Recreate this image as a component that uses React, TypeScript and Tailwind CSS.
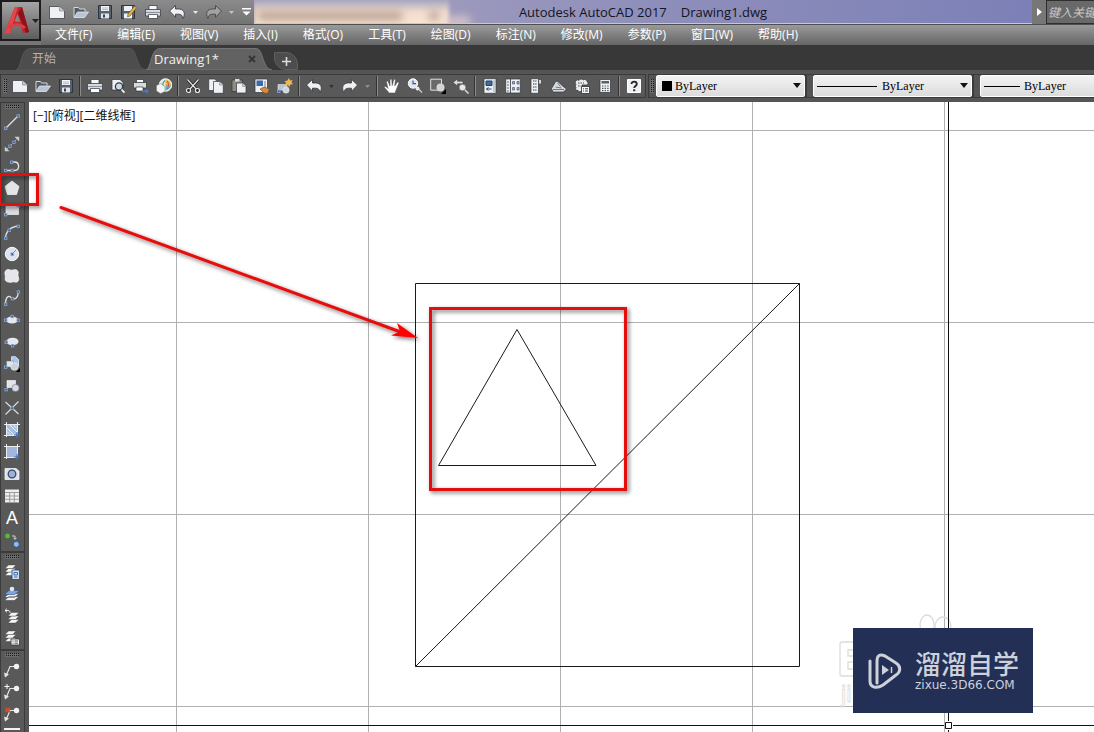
import type { ReactNode } from "react";
import clsx from "clsx";

type Tool = {
  label: string;
  icon: ReactNode;
};

const LIGHT = "#eef0f3";
const DARK = "#2f3338";
const BLUE = "#7fa6dc";

const MENUS = [
  "文件(F)",
  "编辑(E)",
  "视图(V)",
  "插入(I)",
  "格式(O)",
  "工具(T)",
  "绘图(D)",
  "标注(N)",
  "修改(M)",
  "参数(P)",
  "窗口(W)",
  "帮助(H)",
];

function Icon({ children, size = 16 }: { children: ReactNode; size?: number }) {
  return (
    <svg width={size} height={size} viewBox="0 0 16 16" fill="none" aria-hidden="true">
      {children}
    </svg>
  );
}

// small blue grip point used by the draw tools
function Node({ x, y }: { x: number; y: number }) {
  return <rect x={x - 1} y={y - 1} width="2.4" height="2.4" fill="#44597c" stroke={BLUE} strokeWidth="0.9" />;
}

const newIcon = (
  <Icon>
    <path d="M.5 2.500h10l5 4.500v7.500h-15z" fill={LIGHT} stroke={DARK} strokeWidth=".7" />
    <path d="M10.500 2.500v4.500h5" fill="#c3c8cf" stroke="#85898f" strokeWidth=".7" />
  </Icon>
);

const openIcon = (
  <Icon>
    <path d="M1 13V3.500h4.500l1 1.500H12v2.500" fill="#555b63" stroke="#d5dae0" />
    <path d="M1 13.500 4.500 8H15.500L11.500 13.500z" fill="#b7c5d6" stroke="#e4e9ef" strokeWidth=".8" />
  </Icon>
);

const saveIcon = (
  <Icon>
    <path d="M1.500 1.500h13v13h-13z" fill="#58626f" stroke="#2d343d" />
    <path d="M4 2h8v5H4z" fill="#f4f6f8" />
    <path d="M5 4h6M5 5.700h6" stroke="#8da2bd" strokeWidth=".7" />
    <path d="M4 9.500h8v5H4z" fill="#dfe4ea" />
    <path d="M6 10.500h2v3H6z" fill="#38404b" />
  </Icon>
);

const saveAsIcon = (
  <Icon>
    <path d="M.5 1.500h13v13H.5z" fill="#58626f" stroke="#2d343d" />
    <path d="M3 2h8v5H3zM3 9.500h8v5H3z" fill="#eef1f4" />
    <path d="m7 10 6.500-8 2 1.700L9 12l-2.500.8z" fill="#e5b447" stroke="#5e4b25" strokeWidth=".6" />
  </Icon>
);

const printIcon = (
  <Icon>
    <path d="M4 1.500h8V6H4z" fill="#f6f7f9" stroke={DARK} strokeWidth=".7" />
    <path d="M.5 5.500h15V12H.5z" fill="#d6dbe1" stroke={DARK} strokeWidth=".7" />
    <path d="M1 8.500h14" stroke="#87909b" />
    <path d="M3.500 10.500h9v4h-9z" fill="#fff" stroke={DARK} strokeWidth=".7" />
  </Icon>
);

const undoIcon = (
  <Icon>
    <path
      d="M.5 7 6.500 1.500V5h3c4.200 0 5.800 2.500 5.800 5.200 0 1.600-.5 3-1.300 4.300-.3-2.800-1.700-4.300-4.500-4.300h-3v3z"
      fill={LIGHT}
      stroke={DARK}
      strokeWidth=".8"
    />
  </Icon>
);

function RedoIcon({ fill = LIGHT }: { fill?: string }) {
  return (
    <Icon>
      <path
        d="M15.500 7 9.500 1.500V5h-3C2.300 5 .7 7.500.7 10.200c0 1.600.5 3 1.300 4.300.3-2.800 1.700-4.300 4.500-4.300h3v3z"
        fill={fill}
        stroke={DARK}
        strokeWidth=".7"
      />
    </Icon>
  );
}

const STANDARD_GROUPS: Tool[][] = [
  [
    { label: "新建", icon: newIcon },
    { label: "打开", icon: openIcon },
    { label: "保存", icon: saveIcon },
  ],
  [
    { label: "打印", icon: printIcon },
    {
      label: "打印预览",
      icon: (
        <Icon>
          <path d="M2 1.500h8l3 3V12H2z" fill={LIGHT} stroke={DARK} strokeWidth=".7" />
          <circle cx="9" cy="8.500" r="3.600" fill="#cfd9e5" stroke="#333941" strokeWidth="1.300" />
          <path d="m11.500 11.500 3 3.200" stroke="#f2f2f2" strokeWidth="1.800" />
        </Icon>
      ),
    },
    {
      label: "发布",
      icon: (
        <Icon>
          <path d="M3.500 1.500h7V5h-7z" fill="#f6f7f9" stroke={DARK} strokeWidth=".7" />
          <path d="M.5 4.500h13v5.500H.5z" fill="#d6dbe1" stroke={DARK} strokeWidth=".7" />
          <path d="M3 9h7v4H3z" fill="#fff" stroke={DARK} strokeWidth=".7" />
          <path d="M9 12.500h4v-2l3 3-3 2.500v-2H9z" fill="#4a78c8" />
        </Icon>
      ),
    },
    {
      label: "三维打印",
      icon: (
        <Icon>
          <circle cx="9.500" cy="7" r="6.300" fill="#e6edf2" stroke="#f1f1f1" />
          <path d="M9.500 1.500A5.700 5.700 0 0 1 15 7H9.500z" fill="#e6b23e" />
          <path d="M15 7a5.700 5.700 0 0 1-5.500 5.500V7z" fill="#6bb7c5" />
          <path d="M9 2.500c-3 2-3 7 0 9" stroke="#4ba36b" strokeWidth="1.400" />
          <path d="M11 3c2 2 2 6 0 8" stroke="#c9504a" />
          <path d="M.5 7.500 4.500 5.500 9 8.500v5L4.500 15.500.5 13z" fill="#f1f3f5" stroke="#777" strokeWidth=".5" />
        </Icon>
      ),
    },
  ],
  [
    {
      label: "剪切",
      icon: (
        <Icon>
          <path d="M2.500 1.500 11 11M13.500 1.500 5 11" stroke="#1e1e1e" strokeWidth="2.800" />
          <path d="M2.500 1.500 11 11M13.500 1.500 5 11" stroke="#e9e9e9" strokeWidth="1.200" />
          <circle cx="3.500" cy="12.500" r="2" stroke="#e9e9e9" strokeWidth="1.200" fill="#222" />
          <circle cx="12.500" cy="12.500" r="2" stroke="#e9e9e9" strokeWidth="1.200" fill="#222" />
        </Icon>
      ),
    },
    {
      label: "复制",
      icon: (
        <Icon>
          <path d="M.7 1h6l2.500 2.500v9H.7z" fill={LIGHT} stroke={DARK} strokeWidth=".7" />
          <path d="M5.500 3.500h6L15.300 7v8.300H5.500z" fill={LIGHT} stroke={DARK} strokeWidth=".7" />
          <path d="M11.500 3.500V7h3.800" fill="#c6cbd2" stroke="#85898f" strokeWidth=".6" />
        </Icon>
      ),
    },
    {
      label: "粘贴",
      icon: (
        <Icon>
          <path d="M1 2h10.500v11.500H1z" fill="#938a80" stroke={DARK} strokeWidth=".7" />
          <path d="M4 1h4.500v2.500H4z" fill="#ddd" />
          <path d="M5.500 5h6L15 8.500V15H5.500z" fill={LIGHT} stroke={DARK} strokeWidth=".7" />
          <path d="M11.500 5v3.500H15" fill="#c6cbd2" stroke="#85898f" strokeWidth=".6" />
        </Icon>
      ),
    },
    {
      label: "特性匹配",
      icon: (
        <Icon>
          <path d="M1 1h12.500v13.500H1z" fill={LIGHT} stroke={DARK} strokeWidth=".7" />
          <path d="M2.500 2.500H9V8H2.500z" fill="#3d6ba8" />
          <path d="M11 3v7" stroke="#6f7c8c" />
          <path d="m6 11 4-2 5.500 2-2 4.500-3.500-.5z" fill="#d58a3c" stroke="#6b4a22" strokeWidth=".6" />
        </Icon>
      ),
    },
    {
      label: "块编辑器",
      icon: (
        <Icon>
          <path d="M1 6.500h9v5.500H1z" fill="#b8c3d2" stroke="#e5e9ee" strokeWidth=".6" />
          <circle cx="9" cy="12" r="3.200" fill="#cfd6df" stroke="#eee" strokeWidth=".5" />
          <Node x={1.500} y={13} />
          <path d="m12 0 1 2.500 2.500-.5-1 2.300 1.500 2-2.700.2L12.500 9l-1.800-2.200L8 7.500 9 5 7.500 3l2.700-.3z" fill="#f0b84a" />
        </Icon>
      ),
    },
  ],
];

const ZOOM_TOOLS: Tool[] = [
  {
    label: "平移",
    icon: (
      <Icon>
        <path
          d="M5 15c-1-2-3-3.500-4.500-5.500C0 8.500 1.500 8 2.500 9L4 10.500 2.500 4c-.2-1.200 1.300-1.500 1.700-.3L6 8 6 2c0-1.300 1.700-1.300 1.800 0L8.200 7.500 9.700 2c.3-1.200 1.900-.8 1.700.4L10.700 8l2.500-3.500c.7-1 2-.2 1.500.9L12.500 11 11 15z"
          fill="#fff"
          stroke="#4b4b4b"
          strokeWidth=".5"
        />
      </Icon>
    ),
  },
  {
    label: "实时缩放",
    icon: (
      <Icon>
        <circle cx="6" cy="5.500" r="4.700" fill="#dfe7f0" stroke="#fff" />
        <path d="M6 2.500v3.200h3" stroke="#365a8a" strokeWidth="1.200" />
        <path d="m10 9.500 5 5" stroke="#cfcfcf" strokeWidth="1.200" />
        <circle cx="10.500" cy="10.500" r="2" fill="#e8e8e8" />
      </Icon>
    ),
  },
  {
    label: "窗口缩放",
    icon: (
      <Icon>
        <path d="M.7 1.200h10.800v11H.7z" fill="#6a6a6a" stroke="#e0e0e0" />
        <circle cx="10.500" cy="9.500" r="4" fill="#d5d5d5" />
        <path d="M16 11v5h-5z" fill="#000" />
      </Icon>
    ),
  },
  {
    label: "缩放上一个",
    icon: (
      <Icon>
        <path d="M0 4.500 4.500 1v2.300H10v2.500H4.500V8z" fill="#dedede" stroke="#333" strokeWidth=".5" />
        <circle cx="9.500" cy="9.500" r="3.300" fill="#e8e8e8" stroke="#555" strokeWidth=".5" />
        <path d="m12 12 3.500 3.500" stroke="#dedede" strokeWidth="1.500" />
      </Icon>
    ),
  },
];

const PALETTE_TOOLS: Tool[] = [
  {
    label: "特性",
    icon: (
      <Icon>
        <path d="M2 .7h12v14.600H2z" fill={LIGHT} stroke={DARK} strokeWidth=".7" />
        <path d="M4 3h6v4.500H4z" fill="#3d6ba8" stroke="#223f66" />
        <path d="M12 2v12" stroke="#9aa2ab" />
        <path d="M4.500 11h5M4.500 11l2-1.500M4.500 11l2 1.500" stroke="#29456d" />
      </Icon>
    ),
  },
  {
    label: "设计中心",
    icon: (
      <Icon>
        <path d="M.7 1h14.600v14H.7z" fill={LIGHT} stroke={DARK} strokeWidth=".7" />
        <path d="M5.500 1v14" stroke={DARK} strokeWidth=".8" />
        <path d="M2 4h2M2 7h2M2 10h2M2 13h2" stroke="#4f627d" strokeWidth=".9" />
        <path d="M7.500 3.500h2v2.500h-2zM12 3.500h2v2.500h-2zM7.500 9.500h2v2.500h-2zM12 9.500h2v2.500h-2z" fill="#9fb2cc" stroke="#33445e" strokeWidth=".6" />
      </Icon>
    ),
  },
  {
    label: "工具选项板",
    icon: (
      <Icon>
        <path d="M3 .7h7.500v14.600H3z" fill={LIGHT} stroke={DARK} strokeWidth=".7" />
        <path d="M10.500 1.500h3V6h-3z" fill="#cfd3d8" stroke={DARK} strokeWidth=".6" />
        <path d="M5 3h3.500M5 6h3.500M5 9h3.500M5 12h3.500" stroke="#6d7681" strokeWidth="1.300" strokeDasharray="1.500 .7" />
      </Icon>
    ),
  },
  {
    label: "图纸集管理器",
    icon: (
      <Icon>
        <path d="M.5 10.500 5 3l2.500 1L11 7.500l4.500 3.500-3 3H2z" fill="#d8dce1" stroke={DARK} strokeWidth=".7" />
        <path d="M2 11.500h11M4.500 9l6 1M6.500 5l3 3.500" stroke="#565d66" strokeWidth=".8" />
      </Icon>
    ),
  },
  {
    label: "标记集管理器",
    icon: (
      <Icon>
        <path
          d="M1.500 3.500c1-2 3-2 3.500-1C6 .5 8.500.7 9 2c1.500-1 4-.5 4 1.500 1.500.5 1.500 3 0 3.500H8v5.500c-2 2-3.500 1-4 0-2 .5-3-1.500-2-3-1-1-1-2 0-3-1-1-1-2-.5-3z"
          fill="#e9ebee"
          stroke={DARK}
          strokeWidth=".8"
        />
        <path d="M4 5h6M4 8h3" stroke="#444" strokeDasharray="1.500 1" />
        <path d="M7.500 8.500h8v7h-8z" fill="#f5f6f7" stroke={DARK} strokeWidth=".8" />
        <path d="M9 10.800h1M11 10.800h3M9 13h1M11 13h3" stroke="#3f4854" />
      </Icon>
    ),
  },
  {
    label: "快速计算器",
    icon: (
      <Icon>
        <path d="M3 1.500h10.500v13H3z" fill={LIGHT} stroke={DARK} strokeWidth=".7" />
        <path d="M4.500 3h7.500v2.500H4.500z" fill="#59616b" />
        <path d="M5 8h7M5 10.300h7M5 12.600h7" stroke="#4d545c" strokeWidth="1.200" strokeDasharray="1.400 1.200" />
      </Icon>
    ),
  },
];

const HELP: Tool = {
  label: "帮助",
  icon: (
    <Icon>
      <path d="M1.500 1.500h13v13h-13z" fill={LIGHT} stroke="#fff" />
      <path d="M5.500 6c0-3.300 5.300-3 5.300 0C10.800 8 8.200 8 8.200 10" stroke="#262626" strokeWidth="1.800" />
      <path d="M7.200 11.300h2v1.900h-2z" fill="#262626" />
    </Icon>
  ),
};

const DRAW_TOOLS: Tool[] = [
  {
    label: "直线",
    icon: (
      <Icon>
        <path d="M1.500 14.500 14 2" stroke="#e4e4e4" strokeWidth="1.300" />
        <Node x={1.500} y={14} />
        <Node x={14} y={1.800} />
      </Icon>
    ),
  },
  {
    label: "构造线",
    icon: (
      <Icon>
        <path d="M2.500 13.500 13 3" stroke="#9bb8e0" strokeDasharray="2 1" />
        <path d="M.8 15.200v-4.700l4.700 4.700zM15.200.8v4.700L10.500.8z" fill="#cfcfcf" />
        <Node x={5.800} y={10} />
        <Node x={9.800} y={6} />
      </Icon>
    ),
  },
  {
    label: "多段线",
    icon: (
      <Icon>
        <path d="M1.500 12.500h9c5.500 0 5.500-8.500 0-8.500H8" stroke="#e4e4e4" strokeWidth="1.300" />
        <Node x={1.500} y={12.300} />
        <Node x={8} y={12.300} />
        <Node x={7.500} y={4} />
      </Icon>
    ),
  },
  {
    label: "多边形",
    icon: (
      <Icon>
        <path d="M8 1 15 6.500 12.500 14.500h-9L1 6.500z" fill="#e3e4e6" stroke="#f8f8f8" strokeWidth=".7" />
      </Icon>
    ),
  },
  {
    label: "矩形",
    icon: (
      <Icon>
        <path d="M2 3.500h12.500v9H2z" fill="#d9dce2" stroke="#f4f4f4" strokeWidth=".7" />
        <Node x={1.500} y={12.500} />
        <Node x={14} y={3.500} />
      </Icon>
    ),
  },
  {
    label: "圆弧",
    icon: (
      <Icon>
        <path d="M1.500 14C2 7 7 2.500 14.500 2.200" stroke="#e4e4e4" strokeWidth="1.300" />
        <Node x={1.500} y={14} />
        <Node x={5} y={6} />
        <Node x={14} y={2.200} />
      </Icon>
    ),
  },
  {
    label: "圆",
    icon: (
      <Icon>
        <circle cx="8" cy="8" r="6.700" fill="#dde4ef" stroke="#fff" strokeWidth=".9" />
        <path d="m8 8 4-4" stroke="#7797c6" />
        <Node x={8} y={8} />
      </Icon>
    ),
  },
  {
    label: "修订云线",
    icon: (
      <Icon>
        <path
          d="M1.500 3c1-1.500 3-1.800 4.500-1 2 .8 4-.8 6-.2 2.300.7 2.500 3 2 4.700-.3 1.500.9 3 .7 5-.3 2.300-2 3-3.700 2.500-2-.7-3.500.7-5.500.3-1.500-.5-3-.3-4-1.800-.8-1.500 0-3-.2-4.500C1 6.300.5 4.500 1.500 3z"
          fill="#e5e6ea"
          stroke="#fff"
          strokeWidth=".7"
        />
      </Icon>
    ),
  },
  {
    label: "样条曲线",
    icon: (
      <Icon>
        <path d="M1.500 14c0-7 3-9 5.500-6.500C9.500 10.500 14 9 14.300 2" stroke="#e4e4e4" strokeWidth="1.300" />
        <Node x={1.500} y={14} />
        <Node x={8.300} y={8.500} />
        <Node x={14.200} y={1.800} />
      </Icon>
    ),
  },
  {
    label: "椭圆",
    icon: (
      <Icon>
        <ellipse cx="8" cy="8" rx="6" ry="3.600" fill="#e5e8ee" />
        <Node x={1.500} y={8} />
        <Node x={14} y={8} />
        <Node x={8} y={4.300} />
      </Icon>
    ),
  },
  {
    label: "椭圆弧",
    icon: (
      <Icon>
        <ellipse cx="8.500" cy="7.500" rx="6" ry="3.800" fill="#e5e8ee" />
        <Node x={2} y={8} />
        <Node x={8.500} y={11.500} />
      </Icon>
    ),
  },
  {
    label: "插入块",
    icon: (
      <Icon>
        <path d="M7.500.7h4L14.500 3.500V10h-7z" fill="#a9c5ec" stroke="#e6eefa" strokeWidth=".8" />
        <path d="M2.500 5h7v6h-7z" fill="#e0e4eb" stroke="#5b6472" strokeWidth=".4" />
        <circle cx="10.500" cy="10.500" r="3.800" fill="#c9d0da" stroke="#f1f1f1" strokeWidth=".6" />
        <Node x={1.500} y={11} />
        <path d="M16 12v4h-4z" fill="#000" />
      </Icon>
    ),
  },
  {
    label: "创建块",
    icon: (
      <Icon>
        <path d="M3 2.500h8.500v7H3z" fill="#e0e4eb" stroke="#fff" strokeWidth=".6" />
        <circle cx="11.500" cy="10" r="3.600" fill="#d3dae3" stroke="#6b7482" strokeWidth=".6" />
        <Node x={2} y={11.500} />
      </Icon>
    ),
  },
  {
    label: "点",
    icon: (
      <Icon>
        <path d="M1.500 14.500 14.500 1.500M1.500 2 8 8M8 8l6.500 6" stroke="#dedede" strokeWidth="1.100" />
        <Node x={8} y={8} />
      </Icon>
    ),
  },
  {
    label: "图案填充",
    icon: (
      <Icon>
        <path d="M3 3h10v10H3z" fill="#a8bede" />
        <path d="m3 6 7 7M3 9.500 6.500 13M6 3l7 7M9.500 3 13 6.500" stroke="#eef3fb" />
        <path d="M2.500 0v15M13.500 0v12M0 2.500h16M0 13.500h12" stroke="#ececec" />
        <path d="M13 10v6M10 13h6" stroke="#4779cc" strokeWidth="1.200" />
      </Icon>
    ),
  },
  {
    label: "渐变色",
    icon: (
      <Icon>
        <path d="M3 3h10v10H3z" fill="#a3b7dc" />
        <path d="M2.500 0v15M13.500 0v12M0 2.500h16M0 13.500h12" stroke="#ececec" />
        <path d="M13 10v6M10 13h6" stroke="#4779cc" strokeWidth="1.200" />
      </Icon>
    ),
  },
  {
    label: "面域",
    icon: (
      <Icon>
        <path d="M1 2.500h11l3 2.500v8.500H1z" fill="#dfe4ec" stroke="#fff" strokeWidth=".7" />
        <circle cx="8" cy="8" r="3.800" fill="#9db2d2" stroke="#33496c" strokeWidth="1.300" />
      </Icon>
    ),
  },
  {
    label: "表格",
    icon: (
      <Icon>
        <path d="M1 1.500h14v13H1z" fill="#ededed" />
        <path d="M1 4.500h14M1 8h14M1 11.300h14M5.700 4.500v10M10.300 4.500v10" stroke="#8a8a8a" strokeWidth=".8" />
      </Icon>
    ),
  },
  {
    label: "多行文字",
    icon: (
      <span aria-hidden="true" className="font-['Liberation_Sans'] text-lg leading-5 text-white">
        A
      </span>
    ),
  },
  {
    label: "添加选定对象",
    icon: (
      <Icon>
        <circle cx="3.500" cy="4" r="2.900" fill="#62b04c" stroke="#2c5a21" strokeWidth=".6" />
        <path d="M8 4h3v3M9.500 5.800 11 7.500l1.500-1.700" stroke="#d0d0d0" />
        <circle cx="12.300" cy="12.300" r="3" fill="#8dbdf0" stroke="#234a78" strokeWidth=".8" />
      </Icon>
    ),
  },
];

function Layers({ x = 0, y = 0 }: { x?: number; y?: number }) {
  return (
    <g transform={`translate(${x} ${y})`} stroke="#3a3a3a" strokeWidth=".4" fill="#f5f5f5">
      <path d="M0 11.500 3.500 8H11L7.500 11.500z" />
      <path d="M0 8 3.500 4.500H11L7.500 8z" />
      <path d="M0 4.500 3.500 1H11L7.500 4.500z" />
    </g>
  );
}

const LAYER_TOOLS: Tool[] = [
  {
    label: "图层特性管理器",
    icon: (
      <Icon>
        <Layers x={1} />
        <path d="M8 6h7.500v9.500H8z" fill="#cfe0f5" stroke="#2d4567" strokeWidth=".8" />
        <path d="M10 8.500h3.500v2.500H10zM10 13h3.500" stroke="#3d6ba8" />
      </Icon>
    ),
  },
  {
    label: "将对象的图层置为当前",
    icon: (
      <Icon>
        <path d="M.5 14.500 5 10.500H15L10.500 14.500zM.5 11.500 5 7.500H15l-4.500 4z" fill="#f1f1f1" stroke="#3a3a3a" strokeWidth=".5" />
        <path d="M.5 8.500 5 4.500H15.500l-4.700 4z" fill="#7aa5dd" stroke="#345784" strokeWidth=".6" />
        <circle cx="8" cy="3" r="2.300" fill="#dde7f5" />
      </Icon>
    ),
  },
  {
    label: "上一个图层",
    icon: (
      <Icon>
        <Layers x={4} y={3.500} />
        <path d="M1 2.500h3c2 0 2 1.500 2 2.500M3 .7 1 2.500 3 4.300" stroke="#eee" />
      </Icon>
    ),
  },
  {
    label: "图层状态管理器",
    icon: (
      <Icon>
        <Layers x={1} />
        <path d="M7 9h8.500v6H7z" fill="#f5f5f5" stroke="#333" strokeWidth=".8" />
        <path d="M8.500 11h1M10.500 11h3.500M8.500 13.200h1M10.500 13.200h3.500" stroke="#555" />
      </Icon>
    ),
  },
];

function Leader({ children }: { children?: ReactNode }) {
  return (
    <Icon>
      <path d="M2 14 6 4.500h5" stroke="#e6e6e6" strokeWidth="1.200" />
      <path d="M0 10.500 1 15.500 5 12.500z" fill="#e6e6e6" />
      {children}
      <circle cx="12.500" cy="4.500" r="2.700" fill="#f2f2f2" />
    </Icon>
  );
}

const LEADER_TOOLS: Tool[] = [
  { label: "多重引线", icon: <Leader /> },
  {
    label: "添加引线",
    icon: (
      <Leader>
        <path d="M3 0v5M.5 2.500h5" stroke="#fff" />
      </Leader>
    ),
  },
  {
    label: "删除引线",
    icon: (
      <Leader>
        <path d="m1.500 2 4.500 4M6 2 1.500 6" stroke="#d4502c" strokeWidth="1.700" />
      </Leader>
    ),
  },
  {
    label: "对齐引线",
    icon: (
      <Icon>
        <path d="M0 1h16" stroke="#f2f2f2" strokeWidth="2" />
      </Icon>
    ),
  },
];

function ToolButton({ tool, vertical = false }: { tool: Tool; vertical?: boolean }) {
  return (
    <button
      type="button"
      title={tool.label}
      aria-label={tool.label}
      className={clsx(
        "flex shrink-0 items-center justify-center hover:bg-white/10",
        vertical ? "h-[22px] w-[22px]" : "h-5 w-[23px]",
      )}
    >
      {tool.icon}
    </button>
  );
}

function Divider() {
  return (
    <div className="flex h-5 w-1.5 shrink-0 justify-center">
      <span className="w-px bg-[#333]" />
      <span className="w-px bg-[#8b8b8b]" />
    </div>
  );
}

function CaretButton({ label, color }: { label: string; color: string }) {
  return (
    <button type="button" aria-label={label} className="flex h-5 w-[13px] shrink-0 items-center justify-center">
      <svg width="5" height="3" viewBox="0 0 5 3" aria-hidden="true">
        <path d="M0 0h5L2.500 3z" fill={color} />
      </svg>
    </button>
  );
}

function Grip({ vertical = false }: { vertical?: boolean }) {
  return (
    <span
      className={clsx(
        "block shrink-0 bg-[conic-gradient(#161616_25%,#6c6c6c_0)] bg-[size:2px_2px]",
        vertical ? "mx-1 my-0.5 h-1 w-3.5" : "h-3.5 w-1",
      )}
    />
  );
}

function PropertySelect({
  label,
  width,
  indent,
  grip = false,
  children,
}: {
  label: string;
  width: string;
  indent: string;
  grip?: boolean;
  children: ReactNode;
}) {
  return (
    <div className={clsx("flex h-6 shrink-0 items-center gap-0.5 border border-[#3b3b3b]", grip ? "pl-px" : "pl-1.5")}>
      {grip && <Grip />}
      <div className={clsx("relative flex h-[22px] items-center", width)}>
        <select
          aria-label={label}
          className={clsx(
            "h-full w-full appearance-none rounded-xs border border-white bg-linear-to-b from-[#f3f3f3] to-[#dcdcdc] font-['Liberation_Serif',serif] text-xs text-black outline-none",
            indent,
          )}
        >
          <option>ByLayer</option>
        </select>
        {children}
        <svg className="pointer-events-none absolute right-1 top-2" width="8" height="5" viewBox="0 0 8 5" aria-hidden="true">
          <path d="M0 0h8L4 5z" fill="#111" />
        </svg>
      </div>
    </div>
  );
}

function TitleBar() {
  return (
    <div className="flex h-6 bg-linear-to-b from-[#8b8b8b] to-[#737373]">
      <div className="flex w-[213px] shrink-0 items-center pl-1">
        {[
          { label: "新建", icon: newIcon },
          { label: "打开", icon: openIcon },
          { label: "保存", icon: saveIcon },
          { label: "另存为", icon: saveAsIcon },
          { label: "打印", icon: printIcon },
          { label: "放弃", icon: undoIcon },
        ].map((tool) => (
          <button
            key={tool.label}
            type="button"
            aria-label={tool.label}
            className="flex h-5 w-6 shrink-0 items-center justify-center"
          >
            {tool.icon}
          </button>
        ))}
        <CaretButton label="放弃列表" color="#e8e8e8" />
        <button type="button" aria-label="重做" className="flex h-5 w-6 items-center justify-center">
          <RedoIcon fill="#a2a2a2" />
        </button>
        <CaretButton label="重做列表" color="#c5c5c5" />
        <button type="button" aria-label="自定义快速访问工具栏" className="flex h-5 w-4 items-center justify-center">
          <svg width="9" height="8" viewBox="0 0 9 8" aria-hidden="true">
            <path d="M0 0h9v1.500H0zM.5 3.500h8l-4 4z" fill="#fff" />
          </svg>
        </button>
      </div>
      <div className="relative flex min-w-0 flex-1 items-center justify-center overflow-hidden border-b border-[#c6c6dc] bg-linear-to-r from-[#a9a3bd] via-[#8f8fbb] to-[#7c80b6]">
        <div aria-hidden="true" className="absolute -top-1 left-0 h-8 w-[195px] bg-linear-to-b from-[#8e93b8] via-[#f3ddcd] to-[#fbe9da] blur-[2px]" />
        <div aria-hidden="true" className="absolute left-1 top-3 h-2 w-36 bg-[#8b6f62]/60 blur-xs" />
        <div aria-hidden="true" className="absolute left-44 top-3 h-2 w-2 bg-[#7b5f58]/60 blur-xs" />
        <div aria-hidden="true" className="absolute left-48 top-4 h-3 w-6 bg-[#ecd3cd]/70 blur-xs" />
        <h1 className="relative flex gap-3.5 whitespace-nowrap text-[13px] leading-6 text-[#14141c]">
          <span>Autodesk AutoCAD 2017</span>
          <span>Drawing1.dwg</span>
        </h1>
      </div>
      <button type="button" aria-label="展开搜索" className="flex w-3.5 shrink-0 items-center justify-center bg-[#777]">
        <svg width="5" height="8" viewBox="0 0 5 8" aria-hidden="true">
          <path d="M0 0 5 4 0 8z" fill="#fff" />
        </svg>
      </button>
      <input
        type="text"
        aria-label="搜索"
        placeholder="键入关键"
        className="h-full w-12 shrink-0 border border-r-0 border-[#2e2e2e] bg-[#696969] pl-px text-xs italic text-white outline-none placeholder:text-[#c9c9c9]"
      />
    </div>
  );
}

function Header() {
  return (
    <header className="flex shrink-0 bg-[#767676]">
      <button
        type="button"
        aria-label="应用程序菜单"
        className="flex h-[41px] w-[41px] shrink-0 items-center gap-0.5 border-2 border-[#1d1d1d] bg-linear-to-b from-[#a5a5a5] to-[#5e5e5e] pl-0.5"
      >
        <svg width="26" height="30" viewBox="0 0 26 30" aria-hidden="true">
          <path d="M11 1h7l7 25-6 1-2-7-8-1-3 8-6 1z" fill="#c5242c" />
          <path d="M11 1h3L6 27l-6 1z" fill="#e0474b" />
          <path d="m18 1 7 25-3 1L14 7z" fill="#8d1219" />
          <path d="m13.500 8 2.800 8-5.800-.5z" fill="#858585" />
          <path d="M3 21c7-5 13-5 19 0l-2 2c-5-4-9-4-15 0z" fill="#dc3d42" />
        </svg>
        <svg width="7" height="4" viewBox="0 0 7 4" aria-hidden="true">
          <path d="M0 0h7L3.500 4z" fill="#222" />
        </svg>
      </button>
      <div className="min-w-0 flex-1">
        <TitleBar />
        <nav className="flex h-[21px] items-center gap-[25px] overflow-hidden border-t border-[#4e4e4e] bg-linear-to-b from-[#9a9a9a] to-[#666] pl-3.5">
          {MENUS.map((menu) => (
            <button key={menu} type="button" className="shrink-0 whitespace-nowrap text-xs leading-5 text-white">
              {menu}
            </button>
          ))}
        </nav>
      </div>
    </header>
  );
}

function TabShape({ active = false }: { active?: boolean }) {
  return (
    <svg
      className="absolute inset-0 h-full w-full"
      viewBox="0 0 130 22"
      preserveAspectRatio="none"
      aria-hidden="true"
    >
      <path
        d="M0 22C5 21 5 3 12 1 13 .5 14 .5 16 .5H114c7 0 6 21 16 21.500z"
        fill={active ? "#626262" : "#4d4d4d"}
        stroke={active ? "#757575" : "#575757"}
        strokeWidth="1"
      />
    </svg>
  );
}

function FileTabs() {
  return (
    <div className="flex h-[25px] shrink-0 items-end bg-[#383838] pl-4">
      <button type="button" className="relative flex h-[22px] w-[130px] items-center">
        <TabShape />
        <span className="relative pl-4 text-xs leading-5 text-[#b4b4b4]">开始</span>
      </button>
      <div className="relative flex h-[22px] w-[126px] items-center">
        <TabShape active />
        <button type="button" className="relative pl-2 text-[13px] leading-5 text-[#f0f0f0]">
          Drawing1*
        </button>
        <button type="button" aria-label="关闭 Drawing1" className="relative ml-auto mr-3 p-1">
          <svg width="8" height="8" viewBox="0 0 8 8" aria-hidden="true">
            <path d="m1 1 6 6M7 1 1 7" stroke="#333" strokeWidth="1.800" />
          </svg>
        </button>
      </div>
      <button
        type="button"
        aria-label="新图形"
        className="ml-0.5 flex h-[18px] w-6 items-center justify-center rounded-bl-xl rounded-tr-xl border border-[#5f5f5f] bg-[#4d4d4d]"
      >
        <svg width="9" height="9" viewBox="0 0 9 9" aria-hidden="true">
          <path d="M4.500 0v9M0 4.500h9" stroke="#ddd" strokeWidth="1.600" />
        </svg>
      </button>
    </div>
  );
}

function StandardToolbar() {
  return (
    <div className="flex h-8 shrink-0 items-center gap-0.5 overflow-hidden bg-[#555]">
      <div className="flex h-6 shrink-0 items-center border border-[#3b3b3b] bg-[#595959] pl-0.5">
        <Grip />
        <div className="flex items-center pl-px">
          {STANDARD_GROUPS.map((group) => (
            <div key={group[0].label} className="flex items-center">
              {group.map((tool) => (
                <ToolButton key={tool.label} tool={tool} />
              ))}
              <Divider />
            </div>
          ))}
          <ToolButton tool={{ label: "放弃", icon: undoIcon }} />
          <CaretButton label="放弃列表" color="#333" />
          <ToolButton tool={{ label: "重做", icon: <RedoIcon /> }} />
          <CaretButton label="重做列表" color="#8d8d8d" />
          <Divider />
          {ZOOM_TOOLS.map((tool) => (
            <ToolButton key={tool.label} tool={tool} />
          ))}
          <Divider />
          {PALETTE_TOOLS.map((tool) => (
            <ToolButton key={tool.label} tool={tool} />
          ))}
          <Divider />
          <ToolButton tool={HELP} />
        </div>
      </div>
      <div className="flex shrink-0 items-center">
        <PropertySelect label="颜色控制" width="w-[149px]" indent="pl-[18px]" grip>
          <span aria-hidden="true" className="pointer-events-none absolute left-1.5 size-2.5 bg-black" />
        </PropertySelect>
        <PropertySelect label="线型控制" width="w-[159px]" indent="pl-[68px]">
          <span aria-hidden="true" className="pointer-events-none absolute left-1 h-px w-[60px] bg-black" />
        </PropertySelect>
        <PropertySelect label="线宽控制" width="w-[129px]" indent="pl-[43px]">
          <span aria-hidden="true" className="pointer-events-none absolute left-1 h-px w-9 bg-black" />
        </PropertySelect>
      </div>
    </div>
  );
}

function ToolPalette({ tools }: { tools: Tool[] }) {
  return (
    <div className="flex shrink-0 flex-col border border-[#3b3b3b] bg-[#595959] pr-px">
      <Grip vertical />
      {tools.map((tool) => (
        <ToolButton key={tool.label} tool={tool} vertical />
      ))}
    </div>
  );
}

function Viewport() {
  return (
    <main className="relative min-w-0 flex-1 overflow-hidden bg-white">
      <svg className="absolute inset-0 h-full w-full" role="img" aria-label="图形">
        <defs>
          <pattern id="grid" width="192" height="192" x="147" y="28" patternUnits="userSpaceOnUse">
            <path d="M.5 0v192M0 .5h192" stroke="#b0b0b0" />
          </pattern>
        </defs>
        <rect width="100%" height="100%" fill="url(#grid)" />
        <g transform="translate(-29 -102)" fill="none">
          <g stroke="#1a1a1a">
            <path d="M415.500 283.500H799.500V666.500H415.500zM415.500 666.500 799.500 283.500" />
            <path d="M517 329.500 438.500 465.500H596z" />
          </g>
          <g stroke="#dcdcdc" strokeWidth="1.300">
            <ellipse cx="927" cy="625" rx="7" ry="10" />
            <ellipse cx="943" cy="627" rx="8" ry="10" />
            <rect x="840" y="642" width="30" height="34" rx="2" />
            <path d="M848 650h8v6h-8zM848 662h8v7h-8z" />
            <text x="841" y="702" fontSize="24" fontFamily="Liberation Sans" strokeWidth=".8">
              ji
            </text>
          </g>
          <path d="M948.500 0V721M948.500 730V4000M0 725.500H944M953 725.500H4000" stroke="#111" />
          <path d="M945.500 722.500h6v6h-6z" stroke="#111" />
        </g>
      </svg>
      <p className="relative py-1 pl-1 text-xs leading-5 text-[#111]">[−][俯视][二维线框]</p>
      <div className="absolute bottom-[19px] right-[61px] flex h-[85px] w-[180px] items-center gap-3 bg-[#232f55] pl-3.5 text-[#cdd1da]">
        <svg width="36" height="38" viewBox="0 0 36 38" fill="none" aria-hidden="true">
          <path
            d="M10 31V9c0-6 3-7 8-5l11 7c5 3 5 9 0 12L16 33c-6 4-13 3-13-4V9"
            stroke="#cdd1da"
            strokeWidth="3"
            strokeLinecap="round"
            strokeLinejoin="round"
          />
          <path d="m15 13 7 5-7 5z" fill="#cdd1da" />
          <path d="M24.500 15v6" stroke="#cdd1da" strokeWidth="1.500" />
        </svg>
        <div className="whitespace-nowrap">
          <p className="font-['Noto_Sans_CJK_SC',sans-serif] text-[26px] font-medium leading-7">溜溜自学</p>
          <p className="font-['DejaVu_Sans',sans-serif] text-xs leading-4">zixue.3D66.COM</p>
        </div>
      </div>
    </main>
  );
}

// red call-outs drawn over the whole window
function Annotations() {
  return (
    <svg className="pointer-events-none absolute inset-0 h-full w-full" aria-hidden="true">
      <defs>
        <filter id="shadow" x="-20%" y="-20%" width="140%" height="140%">
          <feDropShadow dx="2" dy="2" stdDeviation="2" floodOpacity="0.55" />
        </filter>
      </defs>
      <g filter="url(#shadow)">
        <rect x="0" y="174.500" width="37.500" height="30" fill="none" stroke="#e60d0d" strokeWidth="3" />
        <rect x="430.500" y="308.500" width="195" height="181" fill="none" stroke="#e60d0d" strokeWidth="3" />
        <path d="m61 207.500 341 125" stroke="#e60d0d" strokeWidth="3" strokeLinecap="round" />
        <path d="m418 338-21-15 3 8.500-9 4z" fill="#f00" />
      </g>
    </svg>
  );
}

export default function App() {
  return (
    <div className="relative flex h-dvh flex-col overflow-hidden bg-[#555] font-['Open_Sans','Noto_Sans_CJK_SC',sans-serif]">
      <Header />
      <FileTabs />
      <StandardToolbar />
      <div className="flex min-h-0 flex-1">
        <aside className="flex w-[29px] shrink-0 flex-col items-start overflow-hidden">
          <ToolPalette tools={DRAW_TOOLS} />
          <ToolPalette tools={LAYER_TOOLS} />
          <ToolPalette tools={LEADER_TOOLS} />
        </aside>
        <Viewport />
      </div>
      <Annotations />
    </div>
  );
}
